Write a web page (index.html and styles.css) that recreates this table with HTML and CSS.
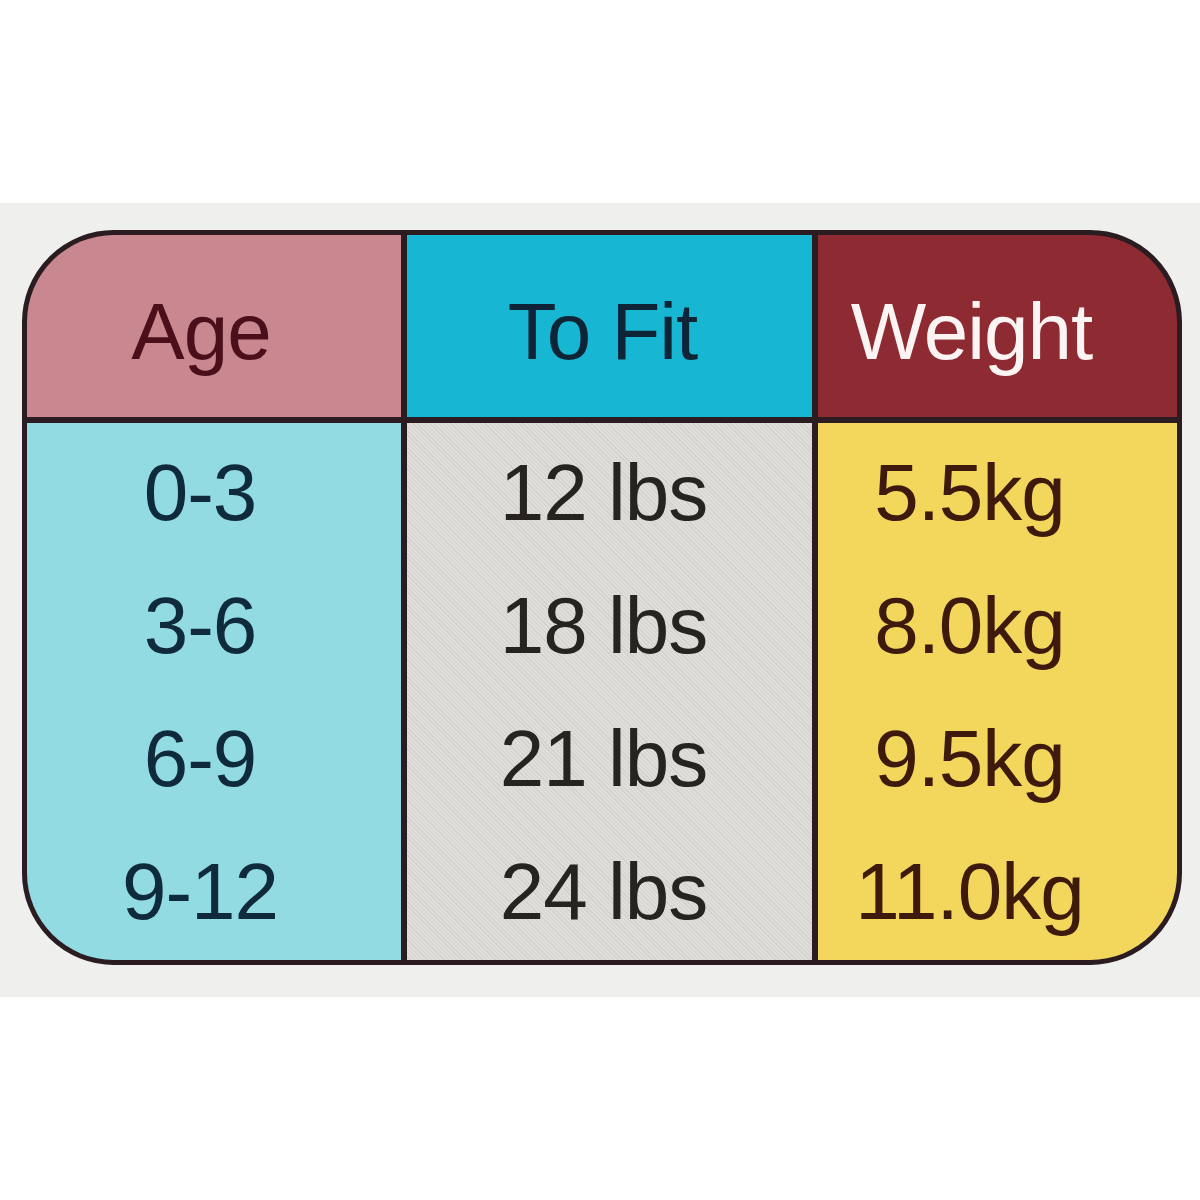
FILE: index.html
```html
<!DOCTYPE html>
<html lang="en">
<head>
<meta charset="utf-8">
<title>Size chart</title>
<link rel="stylesheet" href="styles.css">
</head>
<body>
<div class="photo">
  <div class="chart">
    <div class="head head-age">Age</div>
    <div class="head head-fit">To Fit</div>
    <div class="head head-weight">Weight</div>
    <div class="col col-age">
      <div class="cell">0-3</div>
      <div class="cell">3-6</div>
      <div class="cell">6-9</div>
      <div class="cell">9-12</div>
    </div>
    <div class="col col-fit">
      <div class="cell">12 lbs</div>
      <div class="cell">18 lbs</div>
      <div class="cell">21 lbs</div>
      <div class="cell">24 lbs</div>
    </div>
    <div class="col col-weight">
      <div class="cell">5.5kg</div>
      <div class="cell">8.0kg</div>
      <div class="cell">9.5kg</div>
      <div class="cell">11.0kg</div>
    </div>
  </div>
</div>
</body>
</html>
```

FILE: styles.css
```css
html, body {
  margin: 0;
  padding: 0;
  background: #ffffff;
}

body {
  width: 1200px;
  height: 1200px;
  font-family: "Liberation Sans", Arial, sans-serif;
}

.photo {
  margin-top: 203px;
  height: 794px;
  box-sizing: border-box;
  padding: 27px 18px 0 22px;
  background: #efefed;
}

.chart {
  display: grid;
  grid-template-columns: 374px 405px 359px;
  grid-template-rows: 182px 537px;
  gap: 6px;
  width: 1150px;
  border: 5px solid #2a1c20;
  border-radius: 92px;
  overflow: hidden;
  background: #2a1c20;
  font-size: 80px;
  letter-spacing: -1px;
}

.head {
  display: flex;
  align-items: center;
  justify-content: center;
  padding-top: 12px;
  box-sizing: border-box;
}

.head-age {
  background: #c98890;
  color: #4a0f1a;
  padding-right: 26px;
}

.head-fit {
  background: #17b6d3;
  color: #0f2537;
  padding-right: 14px;
}

.head-weight {
  background: #8e2a32;
  color: #fbf4f2;
  padding-right: 52px;
}

.col {
  display: flex;
  flex-direction: column;
  padding-top: 3px;
  box-sizing: border-box;
}

.cell {
  height: 133px;
  line-height: 133px;
  text-align: center;
  white-space: nowrap;
}

.col-age {
  background: #93dbe3;
  color: #0f2a3a;
  padding-right: 28px;
}

.col-fit {
  background: repeating-linear-gradient(45deg, #dfdedb 0 2px, #d2d1cd 2px 3px);
  color: #27231f;
  padding-right: 12px;
}

.col-weight {
  background: #f3d75c;
  color: #3d1a0c;
  padding-right: 56px;
}
```
